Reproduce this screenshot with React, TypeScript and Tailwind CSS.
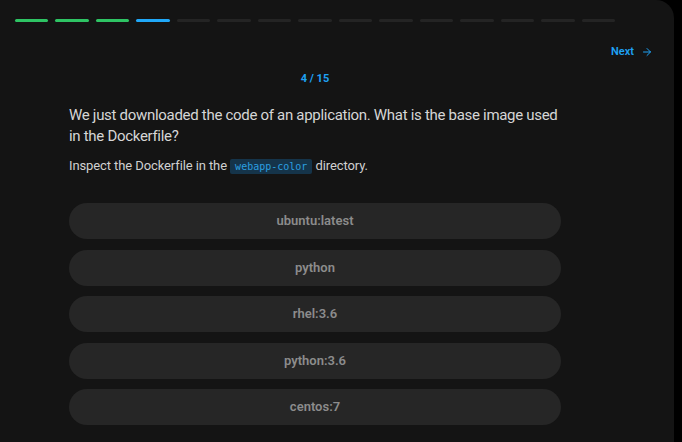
import React from 'react';
import { ArrowRight } from 'lucide-react';

const steps = ['done', 'done', 'done', 'current', ...Array(11).fill('todo')];
const options = ['ubuntu:latest', 'python', 'rhel:3.6', 'python:3.6', 'centos:7'];

export default function App() {
  return (
    <div className="min-h-screen w-[682px] h-[442px] bg-black overflow-hidden font-['Roboto','Noto_Sans',sans-serif]">
      <div className="w-[674px] h-full bg-[#141414] rounded-tr-[18px] pt-[19px]">
        {/* progress */}
        <div className="flex gap-[7px] w-[600px] ml-[15px]">
          {steps.map((s, i) => (
            <div
              key={i}
              className={
                s === 'done'
                  ? 'flex-1 h-[3px] rounded-full bg-[#2ec464]'
                  : s === 'current'
                  ? 'flex-1 h-[3px] rounded-full bg-[#20a8f8]'
                  : 'flex-1 h-[3px] rounded-full bg-[#242424]'
              }
            />
          ))}
        </div>

        <div className="flex justify-end pr-[21px] mt-[22px]">
          <button className="flex items-center gap-[7px] text-[11px] font-semibold text-[#1ea2f5] leading-[16px]">
            Next <ArrowRight className="w-[12px] h-[12px]" strokeWidth={2} />
          </button>
        </div>

        <div className="w-[492px] ml-[69px]">
          <p className="text-center text-[11px] font-bold text-[#1ea2f5] mt-[11px] leading-[16px]">4 / 15</p>

          <h2 className="mt-[18px] text-[15px] leading-[21px] tracking-[-0.3px] text-[#d6d6d6]">
            We just downloaded the code of an application. What is the base image used in the Dockerfile?
          </h2>
          <p className="mt-[10px] text-[13px] leading-[18px] tracking-[-0.1px] text-[#d0d0d0]">
            Inspect the Dockerfile in the{' '}
            <code className="inline-block px-[5px] leading-[15px] tracking-normal rounded-[2px] bg-[#15344a] text-[#2b9fe0] text-[10px] font-['DejaVu_Sans_Mono',monospace]">
              webapp-color
            </code>{' '}
            directory.
          </p>

          <div className="flex flex-col gap-[10.5px] mt-[28px]">
            {options.map((o) => (
              <button
                key={o}
                className="h-9 w-full rounded-full bg-[#262626] text-[13px] font-semibold text-[#8c8c8c]"
              >
                {o}
              </button>
            ))}
          </div>
        </div>
      </div>
    </div>
  );
}
